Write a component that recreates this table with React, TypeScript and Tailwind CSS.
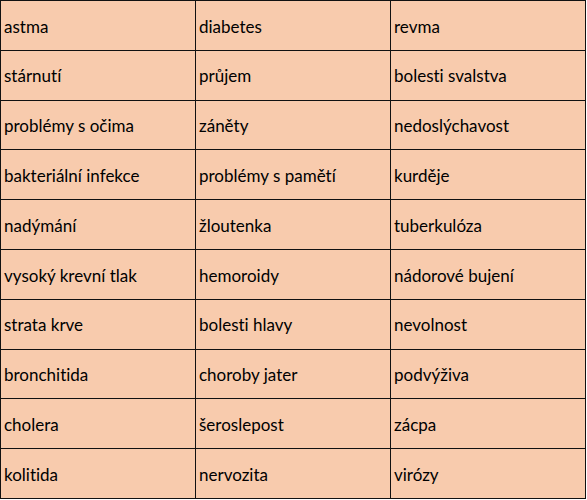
const rows: string[][] = [
  ["astma", "diabetes", "revma"],
  ["stárnutí", "průjem", "bolesti svalstva"],
  ["problémy s očima", "záněty", "nedoslýchavost"],
  ["bakteriální infekce", "problémy s pamětí", "kurděje"],
  ["nadýmání", "žloutenka", "tuberkulóza"],
  ["vysoký krevní tlak", "hemoroidy", "nádorové bujení"],
  ["strata krve", "bolesti hlavy", "nevolnost"],
  ["bronchitida", "choroby jater", "podvýživa"],
  ["cholera", "šeroslepost", "zácpa"],
  ["kolitida", "nervozita", "virózy"],
];

export default function App() {
  return (
    <div className="w-[587px] h-[500px] bg-white">
      <div
        className="grid grid-cols-[195px_195px_195px] w-[586px] border-t border-l border-[#111] bg-[#f8cbad] text-[17px] text-black [font-variant-ligatures:none]"
        style={{ fontFamily: "Lato, 'Open Sans', sans-serif" }}
      >
        {rows.map((row, i) =>
          row.map((cell, j) => (
            <div
              key={i + "-" + j}
              className="h-[49.8px] flex items-center pl-[3px] pt-[2px] border-r border-b border-[#111] whitespace-nowrap"
            >
              {cell}
            </div>
          ))
        )}
      </div>
    </div>
  );
}
